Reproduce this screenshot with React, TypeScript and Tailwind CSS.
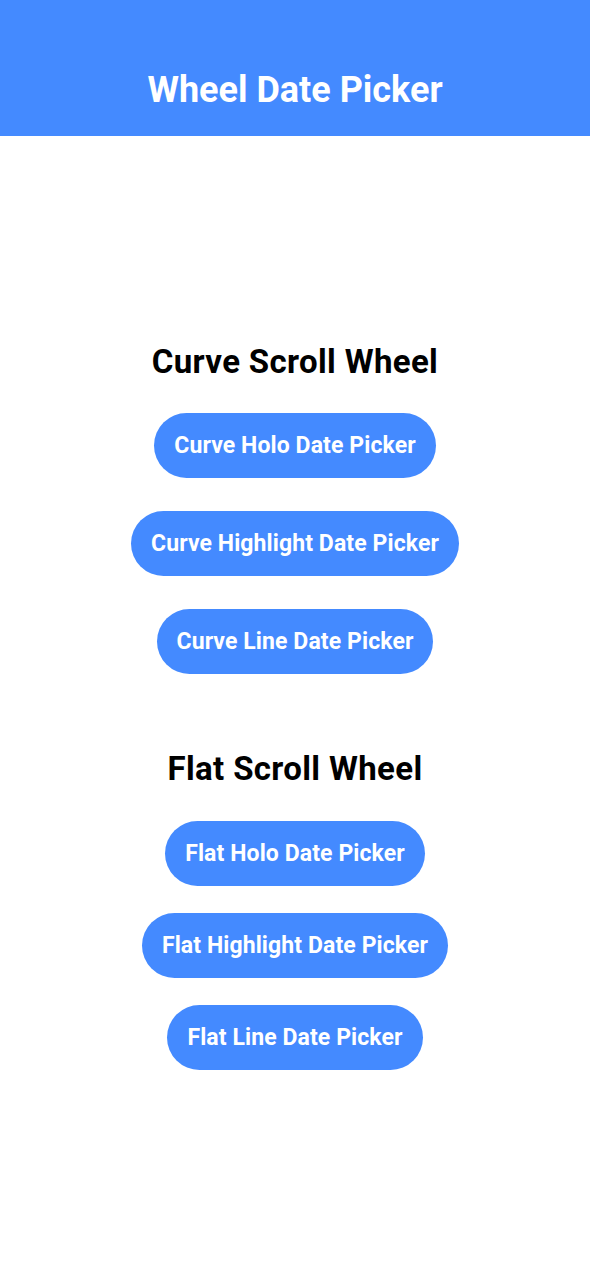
import React from "react";

const font = { fontFamily: "Roboto, 'Noto Sans', sans-serif" };

function PickerButton({ label }: { label: string }) {
  return (
    <button className="h-[65px] px-[20px] rounded-full bg-[#448AFF] text-white font-bold text-[23px] tracking-[0.1px] leading-none flex items-center justify-center">
      {label}
    </button>
  );
}

export default function App() {
  return (
    <div className="min-h-[1280px] w-full bg-white" style={font}>
      <header className="h-[136px] bg-[#448AFF] pt-[72px] text-center">
        <h1 className="text-[36px] leading-none font-bold text-white">Wheel Date Picker</h1>
      </header>
      <main className="flex flex-col items-center pt-[209px]">
        <h2 className="text-[33px] tracking-[0.35px] leading-none font-bold text-black">Curve Scroll Wheel</h2>
        <div className="mt-[35px] flex flex-col items-center gap-[33px]">
          <PickerButton label="Curve Holo Date Picker" />
          <PickerButton label="Curve Highlight Date Picker" />
          <PickerButton label="Curve Line Date Picker" />
        </div>
        <h2 className="mt-[78px] text-[33px] tracking-[0.35px] leading-none font-bold text-black">Flat Scroll Wheel</h2>
        <div className="mt-[36px] flex flex-col items-center gap-[27px]">
          <PickerButton label="Flat Holo Date Picker" />
          <PickerButton label="Flat Highlight Date Picker" />
          <PickerButton label="Flat Line Date Picker" />
        </div>
      </main>
    </div>
  );
}
